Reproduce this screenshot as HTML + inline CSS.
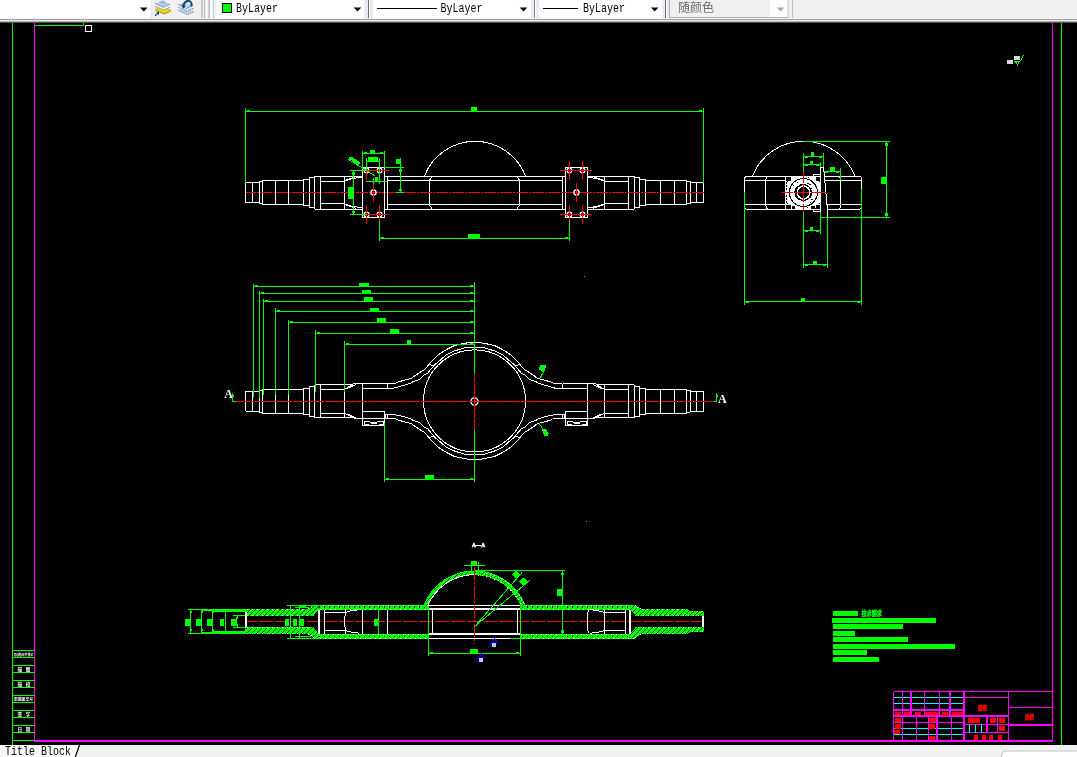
<!DOCTYPE html>
<html><head><meta charset="utf-8"><title>Title Block</title>
<style>
html,body{margin:0;padding:0;background:#000;overflow:hidden}
svg{display:block}
.mono{font-family:"Liberation Mono","DejaVu Sans Mono",monospace;font-size:10px;fill:#000}
.sf{font-family:"Liberation Serif",serif}
.cj{font-family:"Liberation Sans","Noto Sans CJK SC",sans-serif}
.cjs{font-family:"Liberation Sans","Noto Sans CJK SC",sans-serif}
</style></head><body>
<svg width="1077" height="757" viewBox="0 0 1077 757">
<defs>
<filter id="n" x="0" y="0" width="100%" height="100%" filterUnits="userSpaceOnUse" color-interpolation-filters="sRGB"><feOffset dx="0" dy="0"/></filter>
<pattern id="h" width="5" height="5" patternUnits="userSpaceOnUse"><rect width="5" height="5" fill="#00ff00"/><path d="M-1,1 L1,-1 M0,5 L5,0 M4,6 L6,4" stroke="#000" stroke-width="0.72" shape-rendering="crispEdges"/></pattern>
<pattern id="h2" width="4" height="4" patternUnits="userSpaceOnUse"><rect width="4" height="4" fill="#00ff00"/><rect x="1" y="1" width="1" height="1" fill="#000"/></pattern>
<pattern id="h3" width="4" height="4" patternUnits="userSpaceOnUse"><rect width="4" height="4" fill="#00ff00"/><path d="M0,4 L4,0" stroke="#000" stroke-width="0.7"/></pattern>
</defs>
<rect x="0" y="0" width="1077" height="757" fill="#000"/>
<g shape-rendering="crispEdges" filter="url(#n)">
<line x1="12.5" y1="23.0" x2="12.5" y2="745.0" stroke="#00ff00" stroke-width="1" />
<line x1="1061.5" y1="23.0" x2="1061.5" y2="745.0" stroke="#00ff00" stroke-width="1" />
<line x1="34.5" y1="23.0" x2="34.5" y2="741.0" stroke="#ff00ff" stroke-width="1" />
<line x1="1052.5" y1="23.0" x2="1052.5" y2="741.0" stroke="#ff00ff" stroke-width="1" />
<rect x="34.0" y="740.0" width="1019.0" height="2.0" fill="#ff00ff"/>
<polyline points="34.5,25.5 83.5,25.5 83.5,23.0" fill="none" stroke="#00ff00" stroke-width="1" />
<rect x="85.5" y="25.5" width="6.0" height="6.0" fill="none" stroke="#ffffff" stroke-width="1"/>
<line x1="12.5" y1="650.5" x2="34.5" y2="650.5" stroke="#00ff00" stroke-width="1" />
<line x1="12.5" y1="657.5" x2="34.5" y2="657.5" stroke="#00ff00" stroke-width="1" />
<line x1="12.5" y1="665.5" x2="34.5" y2="665.5" stroke="#00ff00" stroke-width="1" />
<line x1="12.5" y1="672.5" x2="34.5" y2="672.5" stroke="#00ff00" stroke-width="1" />
<line x1="12.5" y1="680.5" x2="34.5" y2="680.5" stroke="#00ff00" stroke-width="1" />
<line x1="12.5" y1="687.5" x2="34.5" y2="687.5" stroke="#00ff00" stroke-width="1" />
<line x1="12.5" y1="695.5" x2="34.5" y2="695.5" stroke="#00ff00" stroke-width="1" />
<line x1="12.5" y1="702.5" x2="34.5" y2="702.5" stroke="#00ff00" stroke-width="1" />
<line x1="12.5" y1="710.5" x2="34.5" y2="710.5" stroke="#00ff00" stroke-width="1" />
<line x1="12.5" y1="717.5" x2="34.5" y2="717.5" stroke="#00ff00" stroke-width="1" />
<line x1="12.5" y1="725.5" x2="34.5" y2="725.5" stroke="#00ff00" stroke-width="1" />
<line x1="12.5" y1="732.5" x2="34.5" y2="732.5" stroke="#00ff00" stroke-width="1" />
<line x1="12.5" y1="740.5" x2="34.5" y2="740.5" stroke="#00ff00" stroke-width="1" />
<text x="23.5" y="656.0" font-size="3.1" fill="#ffffff" text-anchor="middle" font-weight="bold" class="cj" textLength="19.5" lengthAdjust="spacingAndGlyphs">借(通)用件登记</text>
<text x="19.9" y="671.0" font-size="4.6" fill="#ffffff" text-anchor="middle" font-weight="bold" class="cj">描</text>
<text x="28.1" y="671.0" font-size="4.6" fill="#ffffff" text-anchor="middle" font-weight="bold" class="cj">图</text>
<text x="19.9" y="686.0" font-size="4.6" fill="#ffffff" text-anchor="middle" font-weight="bold" class="cj">描</text>
<text x="28.1" y="686.0" font-size="4.6" fill="#ffffff" text-anchor="middle" font-weight="bold" class="cj">校</text>
<text x="23.5" y="701.0" font-size="4.0" fill="#ffffff" text-anchor="middle" font-weight="bold" class="cj" textLength="19.5" lengthAdjust="spacingAndGlyphs">旧底图总号</text>
<text x="19.9" y="716.0" font-size="4.6" fill="#ffffff" text-anchor="middle" font-weight="bold" class="cj">签</text>
<text x="28.1" y="716.0" font-size="4.6" fill="#ffffff" text-anchor="middle" font-weight="bold" class="cj">字</text>
<text x="19.9" y="731.0" font-size="4.6" fill="#ffffff" text-anchor="middle" font-weight="bold" class="cj">日</text>
<text x="28.1" y="731.0" font-size="4.6" fill="#ffffff" text-anchor="middle" font-weight="bold" class="cj">期</text>
<line x1="245.5" y1="182.4" x2="259.0" y2="182.4" stroke="#ffffff" stroke-width="1" />
<line x1="245.5" y1="202.6" x2="259.0" y2="202.6" stroke="#ffffff" stroke-width="1" />
<line x1="245.5" y1="182.4" x2="245.5" y2="202.6" stroke="#ffffff" stroke-width="1" />
<line x1="259.0" y1="181.4" x2="262.3" y2="181.4" stroke="#ffffff" stroke-width="1" />
<line x1="259.0" y1="203.6" x2="262.3" y2="203.6" stroke="#ffffff" stroke-width="1" />
<line x1="259.0" y1="181.4" x2="259.0" y2="203.6" stroke="#ffffff" stroke-width="1" />
<line x1="262.3" y1="180.6" x2="303.4" y2="180.6" stroke="#ffffff" stroke-width="1" />
<line x1="262.3" y1="204.4" x2="303.4" y2="204.4" stroke="#ffffff" stroke-width="1" />
<line x1="262.3" y1="180.6" x2="262.3" y2="204.4" stroke="#ffffff" stroke-width="1" />
<line x1="303.4" y1="179.5" x2="309.1" y2="179.5" stroke="#ffffff" stroke-width="1" />
<line x1="303.4" y1="205.5" x2="309.1" y2="205.5" stroke="#ffffff" stroke-width="1" />
<line x1="303.4" y1="179.5" x2="303.4" y2="205.5" stroke="#ffffff" stroke-width="1" />
<line x1="309.1" y1="177.6" x2="314.9" y2="177.6" stroke="#ffffff" stroke-width="1" />
<line x1="309.1" y1="207.4" x2="314.9" y2="207.4" stroke="#ffffff" stroke-width="1" />
<line x1="309.1" y1="177.6" x2="309.1" y2="207.4" stroke="#ffffff" stroke-width="1" />
<line x1="314.9" y1="176.0" x2="362.3" y2="176.0" stroke="#ffffff" stroke-width="1" />
<line x1="314.9" y1="209.0" x2="362.3" y2="209.0" stroke="#ffffff" stroke-width="1" />
<line x1="314.9" y1="176.0" x2="314.9" y2="209.0" stroke="#ffffff" stroke-width="1" />
<line x1="252.3" y1="182.4" x2="252.3" y2="202.6" stroke="#ffffff" stroke-width="1" />
<line x1="275.0" y1="180.6" x2="275.0" y2="204.4" stroke="#ffffff" stroke-width="1" />
<line x1="288.4" y1="180.6" x2="288.4" y2="204.4" stroke="#ffffff" stroke-width="1" />
<line x1="320.6" y1="176.0" x2="320.6" y2="209.0" stroke="#ffffff" stroke-width="1" />
<line x1="344.5" y1="176.0" x2="344.5" y2="209.0" stroke="#ffffff" stroke-width="1" />
<line x1="320.6" y1="181.3" x2="344.5" y2="181.3" stroke="#ffffff" stroke-width="1" />
<line x1="320.6" y1="203.7" x2="344.5" y2="203.7" stroke="#ffffff" stroke-width="1" />
<polyline points="344.5,181.3 352.0,178.6 362.5,177.2" fill="none" stroke="#ffffff" stroke-width="1" />
<polyline points="344.5,203.7 352.0,206.4 362.5,207.8" fill="none" stroke="#ffffff" stroke-width="1" />
<polyline points="346.5,179.9 356.0,176.8" fill="none" stroke="#ffffff" stroke-width="1" />
<polyline points="346.5,205.1 356.0,208.2" fill="none" stroke="#ffffff" stroke-width="1" />
<rect x="362.5" y="167.5" width="22.0" height="50.0" fill="none" stroke="#ffffff" stroke-width="1"/>
<line x1="387.5" y1="176.4" x2="387.5" y2="209.4" stroke="#ffffff" stroke-width="1" />
<line x1="384.5" y1="176.4" x2="387.5" y2="176.4" stroke="#ffffff" stroke-width="1" />
<line x1="384.5" y1="209.4" x2="387.5" y2="209.4" stroke="#ffffff" stroke-width="1" />
<polyline points="432.2,176.4 429.5,180.2 429.5,205.0 432.4,209.4" fill="none" stroke="#ffffff" stroke-width="1" />
<line x1="703.5" y1="182.4" x2="690.0" y2="182.4" stroke="#ffffff" stroke-width="1" />
<line x1="703.5" y1="202.6" x2="690.0" y2="202.6" stroke="#ffffff" stroke-width="1" />
<line x1="703.5" y1="182.4" x2="703.5" y2="202.6" stroke="#ffffff" stroke-width="1" />
<line x1="690.0" y1="181.4" x2="686.7" y2="181.4" stroke="#ffffff" stroke-width="1" />
<line x1="690.0" y1="203.6" x2="686.7" y2="203.6" stroke="#ffffff" stroke-width="1" />
<line x1="690.0" y1="181.4" x2="690.0" y2="203.6" stroke="#ffffff" stroke-width="1" />
<line x1="686.7" y1="180.6" x2="645.6" y2="180.6" stroke="#ffffff" stroke-width="1" />
<line x1="686.7" y1="204.4" x2="645.6" y2="204.4" stroke="#ffffff" stroke-width="1" />
<line x1="686.7" y1="180.6" x2="686.7" y2="204.4" stroke="#ffffff" stroke-width="1" />
<line x1="645.6" y1="179.5" x2="639.9" y2="179.5" stroke="#ffffff" stroke-width="1" />
<line x1="645.6" y1="205.5" x2="639.9" y2="205.5" stroke="#ffffff" stroke-width="1" />
<line x1="645.6" y1="179.5" x2="645.6" y2="205.5" stroke="#ffffff" stroke-width="1" />
<line x1="639.9" y1="177.6" x2="634.1" y2="177.6" stroke="#ffffff" stroke-width="1" />
<line x1="639.9" y1="207.4" x2="634.1" y2="207.4" stroke="#ffffff" stroke-width="1" />
<line x1="639.9" y1="177.6" x2="639.9" y2="207.4" stroke="#ffffff" stroke-width="1" />
<line x1="634.1" y1="176.0" x2="586.7" y2="176.0" stroke="#ffffff" stroke-width="1" />
<line x1="634.1" y1="209.0" x2="586.7" y2="209.0" stroke="#ffffff" stroke-width="1" />
<line x1="634.1" y1="176.0" x2="634.1" y2="209.0" stroke="#ffffff" stroke-width="1" />
<line x1="696.7" y1="182.4" x2="696.7" y2="202.6" stroke="#ffffff" stroke-width="1" />
<line x1="674.0" y1="180.6" x2="674.0" y2="204.4" stroke="#ffffff" stroke-width="1" />
<line x1="660.6" y1="180.6" x2="660.6" y2="204.4" stroke="#ffffff" stroke-width="1" />
<line x1="628.4" y1="176.0" x2="628.4" y2="209.0" stroke="#ffffff" stroke-width="1" />
<line x1="604.5" y1="176.0" x2="604.5" y2="209.0" stroke="#ffffff" stroke-width="1" />
<line x1="628.4" y1="181.3" x2="604.5" y2="181.3" stroke="#ffffff" stroke-width="1" />
<line x1="628.4" y1="203.7" x2="604.5" y2="203.7" stroke="#ffffff" stroke-width="1" />
<polyline points="604.5,181.3 597.0,178.6 587.5,177.2" fill="none" stroke="#ffffff" stroke-width="1" />
<polyline points="604.5,203.7 597.0,206.4 587.5,207.8" fill="none" stroke="#ffffff" stroke-width="1" />
<polyline points="602.5,179.9 593.0,176.8" fill="none" stroke="#ffffff" stroke-width="1" />
<polyline points="602.5,205.1 593.0,208.2" fill="none" stroke="#ffffff" stroke-width="1" />
<rect x="565.5" y="167.5" width="22.0" height="50.0" fill="none" stroke="#ffffff" stroke-width="1"/>
<line x1="562.5" y1="176.4" x2="562.5" y2="209.4" stroke="#ffffff" stroke-width="1" />
<line x1="565.5" y1="176.4" x2="562.5" y2="176.4" stroke="#ffffff" stroke-width="1" />
<line x1="565.5" y1="209.4" x2="562.5" y2="209.4" stroke="#ffffff" stroke-width="1" />
<polyline points="516.8,176.4 519.5,180.2 519.5,205.0 516.6,209.4" fill="none" stroke="#ffffff" stroke-width="1" />
<line x1="387.5" y1="176.4" x2="562.5" y2="176.4" stroke="#ffffff" stroke-width="1" />
<line x1="387.5" y1="209.4" x2="562.5" y2="209.4" stroke="#ffffff" stroke-width="1" />
<line x1="387.5" y1="180.7" x2="562.5" y2="180.7" stroke="#ffffff" stroke-width="1" />
<line x1="387.5" y1="204.5" x2="562.5" y2="204.5" stroke="#ffffff" stroke-width="1" />
<path d="M424.3,176.4 A54.2,54.2 0 0 1 525.7,176.4" fill="none" stroke="#ffffff" stroke-width="1" />
<line x1="245.5" y1="192.5" x2="703.5" y2="192.5" stroke="#ff0000" stroke-width="1" stroke-dasharray="12 1.3 1.5 1.2" stroke-dashoffset="1.7"/>
<circle cx="366.5" cy="170.5" r="2.4" fill="none" stroke="#ffffff" stroke-width="1.25" shape-rendering="geometricPrecision"/>
<circle cx="379.6" cy="170.5" r="2.4" fill="none" stroke="#ffffff" stroke-width="1.25" shape-rendering="geometricPrecision"/>
<line x1="357.1" y1="170.5" x2="389.0" y2="170.5" stroke="#ff0000" stroke-width="1" />
<line x1="366.5" y1="160.8" x2="366.5" y2="179.6" stroke="#ff0000" stroke-width="1" />
<line x1="379.6" y1="160.8" x2="379.6" y2="179.6" stroke="#ff0000" stroke-width="1" />
<circle cx="366.5" cy="214.5" r="2.4" fill="none" stroke="#ffffff" stroke-width="1.25" shape-rendering="geometricPrecision"/>
<circle cx="379.6" cy="214.5" r="2.4" fill="none" stroke="#ffffff" stroke-width="1.25" shape-rendering="geometricPrecision"/>
<line x1="357.1" y1="214.5" x2="389.0" y2="214.5" stroke="#ff0000" stroke-width="1" />
<line x1="366.5" y1="205.0" x2="366.5" y2="223.8" stroke="#ff0000" stroke-width="1" />
<line x1="379.6" y1="205.0" x2="379.6" y2="223.8" stroke="#ff0000" stroke-width="1" />
<circle cx="373.5" cy="192.5" r="2.6" fill="none" stroke="#ffffff" stroke-width="1.25" shape-rendering="geometricPrecision"/>
<line x1="373.5" y1="183.0" x2="373.5" y2="201.8" stroke="#ff0000" stroke-width="1" />
<circle cx="569.4" cy="170.5" r="2.4" fill="none" stroke="#ffffff" stroke-width="1.25" shape-rendering="geometricPrecision"/>
<circle cx="582.5" cy="170.5" r="2.4" fill="none" stroke="#ffffff" stroke-width="1.25" shape-rendering="geometricPrecision"/>
<line x1="560.0" y1="170.5" x2="591.9" y2="170.5" stroke="#ff0000" stroke-width="1" />
<line x1="569.4" y1="160.8" x2="569.4" y2="179.6" stroke="#ff0000" stroke-width="1" />
<line x1="582.5" y1="160.8" x2="582.5" y2="179.6" stroke="#ff0000" stroke-width="1" />
<circle cx="569.4" cy="214.5" r="2.4" fill="none" stroke="#ffffff" stroke-width="1.25" shape-rendering="geometricPrecision"/>
<circle cx="582.5" cy="214.5" r="2.4" fill="none" stroke="#ffffff" stroke-width="1.25" shape-rendering="geometricPrecision"/>
<line x1="560.0" y1="214.5" x2="591.9" y2="214.5" stroke="#ff0000" stroke-width="1" />
<line x1="569.4" y1="205.0" x2="569.4" y2="223.8" stroke="#ff0000" stroke-width="1" />
<line x1="582.5" y1="205.0" x2="582.5" y2="223.8" stroke="#ff0000" stroke-width="1" />
<circle cx="576.5" cy="192.5" r="2.6" fill="none" stroke="#ffffff" stroke-width="1.25" shape-rendering="geometricPrecision"/>
<line x1="576.5" y1="183.0" x2="576.5" y2="201.8" stroke="#ff0000" stroke-width="1" />
<line x1="245.5" y1="111.5" x2="703.5" y2="111.5" stroke="#00ff00" stroke-width="1" />
<line x1="245.5" y1="108.0" x2="245.5" y2="183.0" stroke="#00ff00" stroke-width="1" />
<line x1="703.5" y1="108.0" x2="703.5" y2="183.0" stroke="#00ff00" stroke-width="1" />
<rect x="471.0" y="107.0" width="6.0" height="4.5" fill="#00ff00"/>
<rect x="247.0" y="110.0" width="3.0" height="1.0" fill="#00ff00"/>
<rect x="699.0" y="110.0" width="3.0" height="1.0" fill="#00ff00"/>
<line x1="379.5" y1="238.5" x2="569.5" y2="238.5" stroke="#00ff00" stroke-width="1" />
<line x1="379.5" y1="221.0" x2="379.5" y2="241.0" stroke="#00ff00" stroke-width="1" />
<line x1="569.5" y1="221.0" x2="569.5" y2="241.0" stroke="#00ff00" stroke-width="1" />
<rect x="468.0" y="234.0" width="12.0" height="4.5" fill="#00ff00"/>
<rect x="381.0" y="237.0" width="3.0" height="1.0" fill="#00ff00"/>
<rect x="565.0" y="237.0" width="3.0" height="1.0" fill="#00ff00"/>
<line x1="362.5" y1="153.5" x2="384.5" y2="153.5" stroke="#00ff00" stroke-width="1" />
<line x1="362.5" y1="151.0" x2="362.5" y2="167.5" stroke="#00ff00" stroke-width="1" />
<line x1="384.5" y1="151.0" x2="384.5" y2="167.5" stroke="#00ff00" stroke-width="1" />
<rect x="370.1" y="150.0" width="4.9" height="3.6" fill="#00ff00"/>
<rect x="364.0" y="152.0" width="3.0" height="1.0" fill="#00ff00"/>
<rect x="380.0" y="152.0" width="3.0" height="1.0" fill="#00ff00"/>
<line x1="366.5" y1="161.8" x2="379.6" y2="161.8" stroke="#00ff00" stroke-width="1" />
<line x1="366.5" y1="157.7" x2="366.5" y2="170.5" stroke="#00ff00" stroke-width="1" />
<line x1="379.6" y1="157.7" x2="379.6" y2="183.6" stroke="#00ff00" stroke-width="1" />
<rect x="368.0" y="157.2" width="10.0" height="4.8" fill="#00ff00"/>
<line x1="400.5" y1="157.7" x2="400.5" y2="192.5" stroke="#00ff00" stroke-width="1" />
<line x1="384.5" y1="167.5" x2="404.0" y2="167.5" stroke="#00ff00" stroke-width="1" />
<line x1="396.0" y1="192.5" x2="404.0" y2="192.5" stroke="#00ff00" stroke-width="1" />
<rect x="396.0" y="159.0" width="4.6" height="5.0" fill="#00ff00"/>
<rect x="399.0" y="169.0" width="3.0" height="2.5" fill="#00ff00"/>
<rect x="399.0" y="188.5" width="3.0" height="2.5" fill="#00ff00"/>
<line x1="353.5" y1="170.5" x2="353.5" y2="214.5" stroke="#00ff00" stroke-width="1" />
<line x1="350.0" y1="170.5" x2="366.6" y2="170.5" stroke="#00ff00" stroke-width="1" />
<line x1="350.0" y1="214.5" x2="366.6" y2="214.5" stroke="#00ff00" stroke-width="1" />
<rect x="348.4" y="187.0" width="5.0" height="12.0" fill="#00ff00"/>
<rect x="352.0" y="172.0" width="3.0" height="2.5" fill="#00ff00"/>
<rect x="352.0" y="210.5" width="3.0" height="2.5" fill="#00ff00"/>
<line x1="348.0" y1="159.0" x2="374.6" y2="175.7" stroke="#00ff00" stroke-width="1" />
<polygon points="348.5,158.0 351.0,156.5 360.5,162.5 358.5,165.5" fill="#00ff00" />
<line x1="366.0" y1="181.5" x2="387.0" y2="181.5" stroke="#00ff00" stroke-width="1" />
<line x1="373.5" y1="177.8" x2="373.5" y2="184.2" stroke="#00ff00" stroke-width="1" />
<rect x="374.9" y="177.3" width="3.1" height="4.2" fill="#00ff00"/>
<path d="M747.5,176.3 L858.6,176.3 Q861.7,176.3 861.7,179.5 L861.7,206 Q861.7,209.3 858.6,209.3 L747.5,209.3 Q744.4,209.3 744.4,206 L744.4,179.5 Q744.4,176.3 747.5,176.3 Z" fill="none" stroke="#ffffff" stroke-width="1" />
<line x1="744.4" y1="180.3" x2="861.7" y2="180.3" stroke="#ffffff" stroke-width="1" />
<line x1="744.4" y1="204.5" x2="861.7" y2="204.5" stroke="#ffffff" stroke-width="1" />
<path d="M767.8,176.3 Q765.8,177.3 765.8,180.3 L765.8,205.3 Q765.8,208.3 767.8,209.3" fill="none" stroke="#ffffff" stroke-width="1" />
<path d="M788.3,176.3 Q786.3,177.3 786.3,180.3 L786.3,205.3 Q786.3,208.3 788.3,209.3" fill="none" stroke="#ffffff" stroke-width="1" />
<path d="M838.5,176.3 Q840.5,177.3 840.5,180.3 L840.5,205.3 Q840.5,208.3 838.5,209.3" fill="none" stroke="#ffffff" stroke-width="1" />
<path d="M752.7,175.8 A54.9,54.9 0 0 1 854.7,175.8" fill="none" stroke="#ffffff" stroke-width="1" />
<rect x="785.0" y="176.3" width="36.2" height="33.0" fill="#ffffff"/>
<circle cx="803.4" cy="192.5" r="14.0" fill="none" stroke="#000" stroke-width="1.0"/>
<rect x="786.0" y="177.0" width="4.5" height="3.5" fill="#000"/>
<rect x="816.2" y="177.0" width="4.0" height="3.5" fill="#000"/>
<rect x="785.8" y="205.2" width="4.7" height="3.5" fill="#000"/>
<rect x="816.2" y="205.2" width="4.0" height="3.7" fill="#000"/>
<rect x="810.5" y="206.2" width="4.5" height="2.7" fill="#000"/>
<rect x="791.5" y="206.2" width="3.5" height="2.3" fill="#000"/>
<line x1="791.2" y1="176.3" x2="789.2" y2="178.3" stroke="#000" stroke-width="1" />
<line x1="787.9" y1="181.1" x2="786.1" y2="182.9" stroke="#000" stroke-width="1" />
<line x1="791.2" y1="208.7" x2="789.2" y2="206.7" stroke="#000" stroke-width="1" />
<line x1="787.9" y1="203.9" x2="786.1" y2="202.1" stroke="#000" stroke-width="1" />
<line x1="815.6" y1="176.3" x2="817.6" y2="178.3" stroke="#000" stroke-width="1" />
<line x1="818.9" y1="181.1" x2="820.7" y2="182.9" stroke="#000" stroke-width="1" />
<line x1="815.6" y1="208.7" x2="817.6" y2="206.7" stroke="#000" stroke-width="1" />
<line x1="818.9" y1="203.9" x2="820.7" y2="202.1" stroke="#000" stroke-width="1" />
<line x1="786.3" y1="181.5" x2="786.3" y2="190.0" stroke="#000" stroke-width="1" stroke-dasharray="2 1"/>
<line x1="786.3" y1="195.0" x2="786.3" y2="204.0" stroke="#000" stroke-width="1" stroke-dasharray="2 1"/>
<rect x="785.5" y="176.5" width="35.2" height="32.5" fill="none" stroke="#ffffff" stroke-width="1"/>
<circle cx="803.4" cy="192.5" r="7.9" fill="none" stroke="#000" stroke-width="1.3"/>
<path d="M797.2,187.5 A8,8 0 0 0 797.2,197.5" fill="none" stroke="#000" stroke-width="2.2" />
<polygon points="808.5,194.6 805.5,197.6 801.3,197.6 798.3,194.6 798.3,190.4 801.3,187.4 805.5,187.4 808.5,190.4" fill="#000" />
<rect x="796.9" y="182.0" width="1.1" height="1.1" fill="#000"/>
<rect x="792.9" y="185.0" width="1.1" height="1.1" fill="#000"/>
<rect x="807.4" y="183.0" width="1.1" height="1.1" fill="#000"/>
<rect x="809.4" y="184.0" width="1.1" height="1.1" fill="#000"/>
<rect x="810.9" y="187.5" width="1.1" height="1.1" fill="#000"/>
<rect x="808.9" y="186.5" width="1.1" height="1.1" fill="#000"/>
<rect x="810.4" y="194.5" width="1.1" height="1.1" fill="#000"/>
<rect x="809.4" y="197.0" width="1.1" height="1.1" fill="#000"/>
<rect x="811.4" y="199.0" width="1.1" height="1.1" fill="#000"/>
<rect x="809.9" y="202.0" width="1.1" height="1.1" fill="#000"/>
<rect x="796.9" y="197.5" width="1.1" height="1.1" fill="#000"/>
<rect x="798.4" y="199.0" width="1.1" height="1.1" fill="#000"/>
<rect x="806.9" y="206.5" width="1.1" height="1.1" fill="#000"/>
<rect x="807.9" y="177.0" width="1.1" height="1.1" fill="#000"/>
<polygon points="820.5,167.5 823.6,167.5 827.6,211.5 827.6,216.8 820.5,216.8" fill="#000" />
<polyline points="813.4,176.3 813.4,174.1 820.5,174.1 820.5,167.5 823.6,167.5 827.6,211.5 827.6,216.8" fill="none" stroke="#ffffff" stroke-width="1" />
<polyline points="813.4,209.3 813.4,211.5 820.5,211.5" fill="none" stroke="#ffffff" stroke-width="1" />
<line x1="820.5" y1="167.5" x2="820.5" y2="216.8" stroke="#ffffff" stroke-width="1" />
<line x1="781.0" y1="192.5" x2="825.8" y2="192.5" stroke="#ff0000" stroke-width="1" stroke-dasharray="12 1.5 14.5 1.5 16"/>
<line x1="803.4" y1="172.0" x2="803.4" y2="211.7" stroke="#ff0000" stroke-width="1" stroke-dasharray="10.5 1.5 18 1.5 9"/>
<line x1="803.4" y1="141.4" x2="890.3" y2="141.4" stroke="#00ff00" stroke-width="1" />
<line x1="886.5" y1="141.4" x2="886.5" y2="217.3" stroke="#00ff00" stroke-width="1" />
<line x1="820.5" y1="217.3" x2="890.3" y2="217.3" stroke="#00ff00" stroke-width="1" />
<rect x="881.3" y="177.0" width="5.0" height="7.0" fill="#00ff00"/>
<rect x="885.0" y="143.0" width="3.0" height="3.0" fill="#00ff00"/>
<rect x="885.0" y="213.0" width="3.0" height="3.0" fill="#00ff00"/>
<rect x="805.0" y="157.0" width="3.0" height="1.0" fill="#00ff00"/>
<rect x="819.0" y="157.0" width="3.0" height="1.0" fill="#00ff00"/>
<rect x="805.0" y="165.0" width="3.0" height="1.0" fill="#00ff00"/>
<rect x="816.0" y="165.0" width="3.0" height="1.0" fill="#00ff00"/>
<rect x="825.0" y="172.0" width="3.0" height="1.0" fill="#00ff00"/>
<rect x="836.0" y="172.0" width="3.0" height="1.0" fill="#00ff00"/>
<line x1="803.4" y1="156.5" x2="823.7" y2="156.5" stroke="#00ff00" stroke-width="1" />
<line x1="803.4" y1="153.0" x2="803.4" y2="172.0" stroke="#00ff00" stroke-width="1" />
<line x1="823.7" y1="153.0" x2="823.7" y2="167.0" stroke="#00ff00" stroke-width="1" />
<rect x="811.2" y="152.3" width="2.8" height="4.2" fill="#00ff00"/>
<line x1="803.4" y1="164.7" x2="820.7" y2="164.7" stroke="#00ff00" stroke-width="1" />
<line x1="820.7" y1="161.5" x2="820.7" y2="167.0" stroke="#00ff00" stroke-width="1" />
<rect x="810.0" y="161.0" width="3.0" height="3.7" fill="#00ff00"/>
<line x1="823.7" y1="171.2" x2="840.8" y2="171.2" stroke="#00ff00" stroke-width="1" />
<line x1="840.8" y1="168.0" x2="840.8" y2="180.3" stroke="#00ff00" stroke-width="1" />
<rect x="830.0" y="167.0" width="4.5" height="4.2" fill="#00ff00"/>
<line x1="744.4" y1="191.5" x2="744.4" y2="305.0" stroke="#00ff00" stroke-width="1" />
<line x1="861.5" y1="189.2" x2="861.5" y2="305.0" stroke="#00ff00" stroke-width="1" />
<line x1="744.4" y1="301.6" x2="861.5" y2="301.6" stroke="#00ff00" stroke-width="1" />
<rect x="801.0" y="298.0" width="4.0" height="3.6" fill="#00ff00"/>
<rect x="746.0" y="302.0" width="3.0" height="1.0" fill="#00ff00"/>
<rect x="857.0" y="302.0" width="3.0" height="1.0" fill="#00ff00"/>
<line x1="803.4" y1="211.7" x2="803.4" y2="267.8" stroke="#00ff00" stroke-width="1" />
<line x1="820.5" y1="211.6" x2="820.5" y2="233.6" stroke="#00ff00" stroke-width="1" />
<line x1="827.8" y1="216.5" x2="827.8" y2="267.8" stroke="#00ff00" stroke-width="1" />
<line x1="803.4" y1="230.6" x2="820.5" y2="230.6" stroke="#00ff00" stroke-width="1" />
<rect x="810.0" y="227.0" width="3.0" height="3.6" fill="#00ff00"/>
<rect x="805.0" y="231.0" width="3.0" height="1.0" fill="#00ff00"/>
<rect x="816.0" y="231.0" width="3.0" height="1.0" fill="#00ff00"/>
<line x1="803.4" y1="264.4" x2="827.8" y2="264.4" stroke="#00ff00" stroke-width="1" />
<rect x="813.0" y="261.0" width="3.8" height="3.4" fill="#00ff00"/>
<rect x="805.0" y="265.0" width="3.0" height="1.0" fill="#00ff00"/>
<rect x="823.0" y="265.0" width="3.0" height="1.0" fill="#00ff00"/>
<rect x="840.0" y="203.5" width="1.5" height="1.5" fill="#00ff00"/>
<line x1="245.5" y1="391.1" x2="259.0" y2="391.1" stroke="#ffffff" stroke-width="1" />
<line x1="245.5" y1="411.3" x2="259.0" y2="411.3" stroke="#ffffff" stroke-width="1" />
<line x1="245.5" y1="391.1" x2="245.5" y2="411.3" stroke="#ffffff" stroke-width="1" />
<line x1="259.0" y1="390.1" x2="262.3" y2="390.1" stroke="#ffffff" stroke-width="1" />
<line x1="259.0" y1="412.3" x2="262.3" y2="412.3" stroke="#ffffff" stroke-width="1" />
<line x1="259.0" y1="390.1" x2="259.0" y2="412.3" stroke="#ffffff" stroke-width="1" />
<line x1="262.3" y1="389.3" x2="303.4" y2="389.3" stroke="#ffffff" stroke-width="1" />
<line x1="262.3" y1="413.1" x2="303.4" y2="413.1" stroke="#ffffff" stroke-width="1" />
<line x1="262.3" y1="389.3" x2="262.3" y2="413.1" stroke="#ffffff" stroke-width="1" />
<line x1="303.4" y1="388.2" x2="309.1" y2="388.2" stroke="#ffffff" stroke-width="1" />
<line x1="303.4" y1="414.2" x2="309.1" y2="414.2" stroke="#ffffff" stroke-width="1" />
<line x1="303.4" y1="388.2" x2="303.4" y2="414.2" stroke="#ffffff" stroke-width="1" />
<line x1="309.1" y1="386.3" x2="314.9" y2="386.3" stroke="#ffffff" stroke-width="1" />
<line x1="309.1" y1="416.1" x2="314.9" y2="416.1" stroke="#ffffff" stroke-width="1" />
<line x1="309.1" y1="386.3" x2="309.1" y2="416.1" stroke="#ffffff" stroke-width="1" />
<line x1="314.9" y1="384.7" x2="344.5" y2="384.7" stroke="#ffffff" stroke-width="1" />
<line x1="314.9" y1="417.7" x2="344.5" y2="417.7" stroke="#ffffff" stroke-width="1" />
<line x1="314.9" y1="384.7" x2="314.9" y2="417.7" stroke="#ffffff" stroke-width="1" />
<line x1="252.3" y1="391.1" x2="252.3" y2="411.3" stroke="#ffffff" stroke-width="1" />
<line x1="275.0" y1="389.3" x2="275.0" y2="413.1" stroke="#ffffff" stroke-width="1" />
<line x1="288.4" y1="389.3" x2="288.4" y2="413.1" stroke="#ffffff" stroke-width="1" />
<line x1="320.6" y1="384.7" x2="320.6" y2="417.7" stroke="#ffffff" stroke-width="1" />
<line x1="344.5" y1="384.7" x2="344.5" y2="417.7" stroke="#ffffff" stroke-width="1" />
<line x1="320.6" y1="389.2" x2="344.5" y2="389.2" stroke="#ffffff" stroke-width="1" />
<line x1="320.6" y1="413.2" x2="344.5" y2="413.2" stroke="#ffffff" stroke-width="1" />
<polyline points="344.5,384.5 352.8,384.5 353.4,383.5 387.5,383.5" fill="none" stroke="#ffffff" stroke-width="1" />
<polyline points="344.5,417.5 353.6,417.5 354.4,418.5 362.5,418.5" fill="none" stroke="#ffffff" stroke-width="1" />
<polyline points="344.5,389.2 352.8,384.6" fill="none" stroke="#ffffff" stroke-width="1" />
<polyline points="346.5,388.9 356.0,384.4" fill="none" stroke="#ffffff" stroke-width="1" />
<polyline points="344.5,413.4 353.6,417.4" fill="none" stroke="#ffffff" stroke-width="1" />
<polyline points="346.5,413.6 356.0,418.0" fill="none" stroke="#ffffff" stroke-width="1" />
<line x1="362.5" y1="383.5" x2="362.5" y2="425.7" stroke="#ffffff" stroke-width="1" />
<line x1="362.5" y1="388.5" x2="387.5" y2="388.5" stroke="#ffffff" stroke-width="1" />
<line x1="387.5" y1="383.5" x2="387.5" y2="388.5" stroke="#ffffff" stroke-width="1" />
<line x1="385.4" y1="414.5" x2="385.4" y2="418.5" stroke="#ffffff" stroke-width="1" />
<line x1="387.8" y1="414.5" x2="387.8" y2="418.5" stroke="#ffffff" stroke-width="1" />
<line x1="384.5" y1="414.5" x2="387.8" y2="414.5" stroke="#ffffff" stroke-width="1" />
<line x1="362.5" y1="418.5" x2="387.8" y2="418.5" stroke="#ffffff" stroke-width="1" />
<rect x="362.5" y="411.5" width="22.0" height="14.0" fill="none" stroke="#ffffff" stroke-width="1"/>
<polyline points="364.0,424.5 364.0,421.3 369.5,421.3 370.5,422.5 376.5,422.5 377.5,421.3 383.0,421.3 383.0,424.5" fill="none" stroke="#ffffff" stroke-width="1" />
<line x1="364.0" y1="424.5" x2="368.5" y2="424.5" stroke="#ffffff" stroke-width="1" />
<line x1="378.5" y1="424.5" x2="383.0" y2="424.5" stroke="#ffffff" stroke-width="1" />
<line x1="370.5" y1="423.8" x2="376.5" y2="423.8" stroke="#ffffff" stroke-width="1" />
<polyline points="387.5,383.5 395.7,383.5 396.5,382.5 400.0,381.4 406.4,379.7 411.4,378.5 415.0,375.7 419.2,372.8 423.5,370.3 427.8,366.0 428.9,363.9 433.5,359.3 438.6,354.6 443.6,351.3 448.5,348.5 453.5,346.0 459.0,344.5 464.2,343.5 468.5,342.6 474.5,342.5" fill="none" stroke="#ffffff" stroke-width="1" />
<polyline points="387.5,388.5 392.8,388.5 396.4,387.4 402.8,385.6 410.0,383.5 413.5,381.4 419.2,379.6 423.5,375.3 427.8,373.2 429.6,370.7 433.5,366.7 435.0,364.5 440.0,360.3 445.7,355.3 453.5,351.3 460.0,349.2 465.7,347.5 474.5,347.4" fill="none" stroke="#ffffff" stroke-width="1" />
<polyline points="387.5,418.5 395.7,418.5 396.5,419.5 400.0,420.6 406.4,422.3 411.4,423.5 415.0,426.3 419.2,429.2 423.5,431.7 427.8,436.0 428.9,438.1 433.5,442.7 438.6,447.4 443.6,450.7 448.5,453.5 453.5,456.0 459.0,457.5 464.2,458.5 468.5,459.4 474.5,459.5" fill="none" stroke="#ffffff" stroke-width="1" />
<polyline points="387.5,414.5 392.8,414.5 396.4,415.1 402.8,416.4 410.0,418.5 413.5,420.6 419.2,422.4 423.5,426.7 427.8,428.8 429.6,431.3 433.5,435.3 435.0,437.5 440.0,441.7 445.7,446.7 453.5,450.7 460.0,452.8 465.7,454.5 474.5,454.6" fill="none" stroke="#ffffff" stroke-width="1" />
<line x1="428.9" y1="363.9" x2="433.5" y2="366.0" stroke="#ffffff" stroke-width="1" />
<line x1="428.9" y1="438.1" x2="433.5" y2="436.0" stroke="#ffffff" stroke-width="1" />
<line x1="703.5" y1="391.1" x2="690.0" y2="391.1" stroke="#ffffff" stroke-width="1" />
<line x1="703.5" y1="411.3" x2="690.0" y2="411.3" stroke="#ffffff" stroke-width="1" />
<line x1="703.5" y1="391.1" x2="703.5" y2="411.3" stroke="#ffffff" stroke-width="1" />
<line x1="690.0" y1="390.1" x2="686.7" y2="390.1" stroke="#ffffff" stroke-width="1" />
<line x1="690.0" y1="412.3" x2="686.7" y2="412.3" stroke="#ffffff" stroke-width="1" />
<line x1="690.0" y1="390.1" x2="690.0" y2="412.3" stroke="#ffffff" stroke-width="1" />
<line x1="686.7" y1="389.3" x2="645.6" y2="389.3" stroke="#ffffff" stroke-width="1" />
<line x1="686.7" y1="413.1" x2="645.6" y2="413.1" stroke="#ffffff" stroke-width="1" />
<line x1="686.7" y1="389.3" x2="686.7" y2="413.1" stroke="#ffffff" stroke-width="1" />
<line x1="645.6" y1="388.2" x2="639.9" y2="388.2" stroke="#ffffff" stroke-width="1" />
<line x1="645.6" y1="414.2" x2="639.9" y2="414.2" stroke="#ffffff" stroke-width="1" />
<line x1="645.6" y1="388.2" x2="645.6" y2="414.2" stroke="#ffffff" stroke-width="1" />
<line x1="639.9" y1="386.3" x2="634.1" y2="386.3" stroke="#ffffff" stroke-width="1" />
<line x1="639.9" y1="416.1" x2="634.1" y2="416.1" stroke="#ffffff" stroke-width="1" />
<line x1="639.9" y1="386.3" x2="639.9" y2="416.1" stroke="#ffffff" stroke-width="1" />
<line x1="634.1" y1="384.7" x2="604.5" y2="384.7" stroke="#ffffff" stroke-width="1" />
<line x1="634.1" y1="417.7" x2="604.5" y2="417.7" stroke="#ffffff" stroke-width="1" />
<line x1="634.1" y1="384.7" x2="634.1" y2="417.7" stroke="#ffffff" stroke-width="1" />
<line x1="696.7" y1="391.1" x2="696.7" y2="411.3" stroke="#ffffff" stroke-width="1" />
<line x1="674.0" y1="389.3" x2="674.0" y2="413.1" stroke="#ffffff" stroke-width="1" />
<line x1="660.6" y1="389.3" x2="660.6" y2="413.1" stroke="#ffffff" stroke-width="1" />
<line x1="628.4" y1="384.7" x2="628.4" y2="417.7" stroke="#ffffff" stroke-width="1" />
<line x1="604.5" y1="384.7" x2="604.5" y2="417.7" stroke="#ffffff" stroke-width="1" />
<line x1="628.4" y1="389.2" x2="604.5" y2="389.2" stroke="#ffffff" stroke-width="1" />
<line x1="628.4" y1="413.2" x2="604.5" y2="413.2" stroke="#ffffff" stroke-width="1" />
<polyline points="604.5,384.5 596.2,384.5 595.6,383.5 562.5,383.5" fill="none" stroke="#ffffff" stroke-width="1" />
<polyline points="604.5,417.5 595.4,417.5 594.6,418.5 587.5,418.5" fill="none" stroke="#ffffff" stroke-width="1" />
<polyline points="604.5,389.2 596.2,384.6" fill="none" stroke="#ffffff" stroke-width="1" />
<polyline points="602.5,388.9 593.0,384.4" fill="none" stroke="#ffffff" stroke-width="1" />
<polyline points="604.5,413.4 595.4,417.4" fill="none" stroke="#ffffff" stroke-width="1" />
<polyline points="602.5,413.6 593.0,418.0" fill="none" stroke="#ffffff" stroke-width="1" />
<line x1="587.5" y1="383.5" x2="587.5" y2="425.7" stroke="#ffffff" stroke-width="1" />
<line x1="587.5" y1="388.5" x2="562.5" y2="388.5" stroke="#ffffff" stroke-width="1" />
<line x1="562.5" y1="383.5" x2="562.5" y2="388.5" stroke="#ffffff" stroke-width="1" />
<line x1="564.6" y1="414.5" x2="564.6" y2="418.5" stroke="#ffffff" stroke-width="1" />
<line x1="562.2" y1="414.5" x2="562.2" y2="418.5" stroke="#ffffff" stroke-width="1" />
<line x1="565.5" y1="414.5" x2="562.2" y2="414.5" stroke="#ffffff" stroke-width="1" />
<line x1="587.5" y1="418.5" x2="562.2" y2="418.5" stroke="#ffffff" stroke-width="1" />
<rect x="565.5" y="411.5" width="22.0" height="14.0" fill="none" stroke="#ffffff" stroke-width="1"/>
<polyline points="586.0,424.5 586.0,421.3 580.5,421.3 579.5,422.5 573.5,422.5 572.5,421.3 567.0,421.3 567.0,424.5" fill="none" stroke="#ffffff" stroke-width="1" />
<line x1="586.0" y1="424.5" x2="581.5" y2="424.5" stroke="#ffffff" stroke-width="1" />
<line x1="571.5" y1="424.5" x2="567.0" y2="424.5" stroke="#ffffff" stroke-width="1" />
<line x1="579.5" y1="423.8" x2="573.5" y2="423.8" stroke="#ffffff" stroke-width="1" />
<polyline points="561.5,383.5 553.3,383.5 552.5,382.5 549.0,381.4 542.6,379.7 537.6,378.5 534.0,375.7 529.8,372.8 525.5,370.3 521.2,366.0 520.1,363.9 515.5,359.3 510.4,354.6 505.4,351.3 500.5,348.5 495.5,346.0 490.0,344.5 484.8,343.5 480.5,342.6 474.5,342.5" fill="none" stroke="#ffffff" stroke-width="1" />
<polyline points="561.5,388.5 556.2,388.5 552.6,387.4 546.2,385.6 539.0,383.5 535.5,381.4 529.8,379.6 525.5,375.3 521.2,373.2 519.4,370.7 515.5,366.7 514.0,364.5 509.0,360.3 503.3,355.3 495.5,351.3 489.0,349.2 483.3,347.5 474.5,347.4" fill="none" stroke="#ffffff" stroke-width="1" />
<polyline points="561.5,418.5 553.3,418.5 552.5,419.5 549.0,420.6 542.6,422.3 537.6,423.5 534.0,426.3 529.8,429.2 525.5,431.7 521.2,436.0 520.1,438.1 515.5,442.7 510.4,447.4 505.4,450.7 500.5,453.5 495.5,456.0 490.0,457.5 484.8,458.5 480.5,459.4 474.5,459.5" fill="none" stroke="#ffffff" stroke-width="1" />
<polyline points="561.5,414.5 556.2,414.5 552.6,415.1 546.2,416.4 539.0,418.5 535.5,420.6 529.8,422.4 525.5,426.7 521.2,428.8 519.4,431.3 515.5,435.3 514.0,437.5 509.0,441.7 503.3,446.7 495.5,450.7 489.0,452.8 483.3,454.5 474.5,454.6" fill="none" stroke="#ffffff" stroke-width="1" />
<line x1="520.1" y1="363.9" x2="515.5" y2="366.0" stroke="#ffffff" stroke-width="1" />
<line x1="520.1" y1="438.1" x2="515.5" y2="436.0" stroke="#ffffff" stroke-width="1" />
<circle cx="474.5" cy="400.9" r="51.0" fill="none" stroke="#ffffff" stroke-width="1"/>
<circle cx="474.5" cy="401.5" r="3.6" fill="none" stroke="#ffffff" stroke-width="1.4" shape-rendering="geometricPrecision"/>
<line x1="236.0" y1="401.5" x2="714.0" y2="401.5" stroke="#ff0000" stroke-width="1" stroke-dasharray="14.6 1.4" stroke-dashoffset="7"/>
<line x1="474.5" y1="373.8" x2="474.5" y2="383.0" stroke="#ff0000" stroke-width="1" />
<line x1="474.5" y1="384.2" x2="474.5" y2="415.6" stroke="#ff0000" stroke-width="1" />
<line x1="474.5" y1="416.4" x2="474.5" y2="418.0" stroke="#ff0000" stroke-width="1" />
<line x1="474.5" y1="419.0" x2="474.5" y2="429.8" stroke="#ff0000" stroke-width="1" />
<text x="228.6" y="398.4" font-size="12" font-weight="bold" fill="#fff" text-anchor="middle" class="sf">A</text>
<text x="722.3" y="403.2" font-size="12" font-weight="bold" fill="#fff" text-anchor="middle" class="sf">A</text>
<polyline points="232.6,393.0 232.6,401.5 236.0,401.5" fill="none" stroke="#00ff00" stroke-width="1" />
<rect x="232.6" y="395.2" width="1.8" height="2.2" fill="#00ff00"/>
<polyline points="716.4,393.0 716.4,401.5 714.0,401.5" fill="none" stroke="#00ff00" stroke-width="1" />
<rect x="716.4" y="395.2" width="1.2" height="2.2" fill="#00ff00"/>
<line x1="253.5" y1="286.5" x2="474.5" y2="286.5" stroke="#00ff00" stroke-width="1" />
<line x1="253.5" y1="283.5" x2="253.5" y2="397.0" stroke="#00ff00" stroke-width="1" />
<rect x="359.0" y="282.5" width="9.6" height="4.0" fill="#00ff00"/>
<rect x="255.0" y="285.0" width="3.0" height="1.0" fill="#00ff00"/>
<rect x="470.0" y="285.0" width="3.0" height="1.0" fill="#00ff00"/>
<line x1="259.5" y1="293.5" x2="474.5" y2="293.5" stroke="#00ff00" stroke-width="1" />
<line x1="259.5" y1="290.5" x2="259.5" y2="397.5" stroke="#00ff00" stroke-width="1" />
<rect x="362.0" y="289.5" width="8.6" height="4.0" fill="#00ff00"/>
<rect x="261.0" y="292.0" width="3.0" height="1.0" fill="#00ff00"/>
<rect x="470.0" y="292.0" width="3.0" height="1.0" fill="#00ff00"/>
<line x1="263.4" y1="301.5" x2="474.5" y2="301.5" stroke="#00ff00" stroke-width="1" />
<line x1="263.4" y1="298.5" x2="263.4" y2="395.0" stroke="#00ff00" stroke-width="1" />
<rect x="364.0" y="297.0" width="9.0" height="4.5" fill="#00ff00"/>
<rect x="265.0" y="300.0" width="3.0" height="1.0" fill="#00ff00"/>
<rect x="470.0" y="300.0" width="3.0" height="1.0" fill="#00ff00"/>
<line x1="275.4" y1="311.4" x2="474.5" y2="311.4" stroke="#00ff00" stroke-width="1" />
<line x1="275.4" y1="308.4" x2="275.4" y2="395.0" stroke="#00ff00" stroke-width="1" />
<rect x="370.0" y="307.8" width="8.6" height="3.6" fill="#00ff00"/>
<rect x="277.0" y="310.0" width="3.0" height="1.0" fill="#00ff00"/>
<rect x="470.0" y="310.0" width="3.0" height="1.0" fill="#00ff00"/>
<line x1="288.5" y1="322.5" x2="474.5" y2="322.5" stroke="#00ff00" stroke-width="1" />
<line x1="288.5" y1="319.5" x2="288.5" y2="395.0" stroke="#00ff00" stroke-width="1" />
<rect x="377.0" y="318.2" width="8.7" height="4.3" fill="#00ff00"/>
<rect x="290.0" y="321.0" width="3.0" height="1.0" fill="#00ff00"/>
<rect x="470.0" y="321.0" width="3.0" height="1.0" fill="#00ff00"/>
<line x1="315.5" y1="333.3" x2="474.5" y2="333.3" stroke="#00ff00" stroke-width="1" />
<line x1="315.5" y1="330.3" x2="315.5" y2="392.0" stroke="#00ff00" stroke-width="1" />
<rect x="390.0" y="329.0" width="9.0" height="4.3" fill="#00ff00"/>
<rect x="317.0" y="332.0" width="3.0" height="1.0" fill="#00ff00"/>
<rect x="470.0" y="332.0" width="3.0" height="1.0" fill="#00ff00"/>
<line x1="344.5" y1="344.0" x2="474.5" y2="344.0" stroke="#00ff00" stroke-width="1" />
<line x1="344.5" y1="341.0" x2="344.5" y2="392.0" stroke="#00ff00" stroke-width="1" />
<rect x="406.7" y="340.0" width="4.3" height="4.0" fill="#00ff00"/>
<rect x="346.0" y="343.0" width="3.0" height="1.0" fill="#00ff00"/>
<rect x="470.0" y="343.0" width="3.0" height="1.0" fill="#00ff00"/>
<line x1="474.5" y1="282.0" x2="474.5" y2="373.8" stroke="#00ff00" stroke-width="1" />
<line x1="474.5" y1="429.8" x2="474.5" y2="482.0" stroke="#00ff00" stroke-width="1" />
<line x1="384.8" y1="479.0" x2="474.5" y2="479.0" stroke="#00ff00" stroke-width="1" />
<line x1="384.8" y1="423.0" x2="384.8" y2="481.6" stroke="#00ff00" stroke-width="1" />
<rect x="425.0" y="475.0" width="9.0" height="4.0" fill="#00ff00"/>
<rect x="386.0" y="478.0" width="3.0" height="1.0" fill="#00ff00"/>
<rect x="470.0" y="478.0" width="3.0" height="1.0" fill="#00ff00"/>
<line x1="542.9" y1="372.9" x2="539.9" y2="378.6" stroke="#00ff00" stroke-width="1" />
<polygon points="540.0,365.0 546.0,365.5 545.0,370.0 543.5,373.5 541.5,371.0 538.8,369.5" fill="#00ff00" />
<line x1="539.3" y1="423.5" x2="544.0" y2="431.2" stroke="#00ff00" stroke-width="1" />
<polygon points="542.3,430.5 545.0,428.8 548.8,433.0 547.0,436.5 544.5,436.0" fill="#00ff00" />
<rect x="584.0" y="276.0" width="1.0" height="1.0" fill="#888"/>
<rect x="586.0" y="521.0" width="1.0" height="1.0" fill="#888"/>
<rect x="317.7" y="605.0" width="110.6" height="4.5" fill="#00ff00"/>
<rect x="317.7" y="633.5" width="110.6" height="5.5" fill="#00ff00"/>
<line x1="318.7" y1="607.0" x2="428.3" y2="607.0" stroke="#000" stroke-width="1.6" stroke-dasharray="1.6 3.4"/>
<line x1="318.7" y1="636.5" x2="428.3" y2="636.5" stroke="#000" stroke-width="1.6" stroke-dasharray="1.6 3.4"/>
<line x1="317.7" y1="605.5" x2="428.3" y2="605.5" stroke="#ffffff" stroke-width="1" stroke-dasharray="1 4"/>
<line x1="320.2" y1="609.0" x2="428.3" y2="609.0" stroke="#ffffff" stroke-width="1" stroke-dasharray="1 4"/>
<line x1="317.7" y1="634.0" x2="428.3" y2="634.0" stroke="#ffffff" stroke-width="1" stroke-dasharray="1 4"/>
<line x1="320.2" y1="638.5" x2="428.3" y2="638.5" stroke="#ffffff" stroke-width="1" stroke-dasharray="1 4"/>
<rect x="520.7" y="605.0" width="114.3" height="4.5" fill="#00ff00"/>
<rect x="520.7" y="633.5" width="114.3" height="5.5" fill="#00ff00"/>
<line x1="521.7" y1="607.0" x2="635.0" y2="607.0" stroke="#000" stroke-width="1.6" stroke-dasharray="1.6 3.4"/>
<line x1="521.7" y1="636.5" x2="635.0" y2="636.5" stroke="#000" stroke-width="1.6" stroke-dasharray="1.6 3.4"/>
<line x1="520.7" y1="605.5" x2="635.0" y2="605.5" stroke="#ffffff" stroke-width="1" stroke-dasharray="1 4"/>
<line x1="523.2" y1="609.0" x2="635.0" y2="609.0" stroke="#ffffff" stroke-width="1" stroke-dasharray="1 4"/>
<line x1="520.7" y1="634.0" x2="635.0" y2="634.0" stroke="#ffffff" stroke-width="1" stroke-dasharray="1 4"/>
<line x1="523.2" y1="638.5" x2="635.0" y2="638.5" stroke="#ffffff" stroke-width="1" stroke-dasharray="1 4"/>
<line x1="245.6" y1="621.5" x2="703.0" y2="621.5" stroke="#ff0000" stroke-width="1" stroke-dasharray="14.6 1.4" stroke-dashoffset="3"/>
<polygon points="629.8,605.0 634.9,605.0 641.6,608.9 686.9,608.9 691.4,611.1 704.0,611.1 704.0,616.0 635.7,616.0 630.8,609.7 629.8,609.5" fill="url(#h)" />
<polygon points="629.8,638.0 634.9,638.0 641.6,634.1 686.9,634.1 691.4,631.9 704.0,631.9 704.0,627.0 635.7,627.0 630.8,633.3 629.8,633.5" fill="url(#h)" />
<line x1="642.0" y1="609.4" x2="687.0" y2="609.4" stroke="#ffffff" stroke-width="1" stroke-dasharray="1 4"/>
<line x1="692.0" y1="611.6" x2="704.0" y2="611.6" stroke="#ffffff" stroke-width="1" stroke-dasharray="1 4"/>
<line x1="638.0" y1="615.5" x2="703.0" y2="615.5" stroke="#ffffff" stroke-width="1" stroke-dasharray="1 4"/>
<polyline points="634.9,605.5 641.6,609.4" fill="none" stroke="#ffffff" stroke-width="1" stroke-dasharray="1 2"/>
<line x1="642.0" y1="633.6" x2="687.0" y2="633.6" stroke="#ffffff" stroke-width="1" stroke-dasharray="1 4"/>
<line x1="692.0" y1="631.4" x2="704.0" y2="631.4" stroke="#ffffff" stroke-width="1" stroke-dasharray="1 4"/>
<line x1="638.0" y1="627.5" x2="703.0" y2="627.5" stroke="#ffffff" stroke-width="1" stroke-dasharray="1 4"/>
<polyline points="634.9,637.5 641.6,633.6" fill="none" stroke="#ffffff" stroke-width="1" stroke-dasharray="1 2"/>
<rect x="702.0" y="615.8" width="2.0" height="11.4" fill="#ffffff"/>
<polygon points="319.2,605.0 314.1,605.0 307.4,608.9 245.5,608.9 245.5,616.0 313.3,616.0 318.2,609.7 319.2,609.5" fill="url(#h)" />
<polygon points="319.2,638.0 314.1,638.0 307.4,634.1 245.5,634.1 245.5,627.0 313.3,627.0 318.2,633.3 319.2,633.5" fill="url(#h)" />
<line x1="247.0" y1="609.4" x2="307.0" y2="609.4" stroke="#ffffff" stroke-width="1" stroke-dasharray="1 4"/>
<line x1="247.0" y1="615.5" x2="311.0" y2="615.5" stroke="#ffffff" stroke-width="1" stroke-dasharray="1 4"/>
<polyline points="314.1,605.5 307.4,609.4" fill="none" stroke="#ffffff" stroke-width="1" stroke-dasharray="1 2"/>
<line x1="247.0" y1="633.6" x2="307.0" y2="633.6" stroke="#ffffff" stroke-width="1" stroke-dasharray="1 4"/>
<line x1="247.0" y1="627.5" x2="311.0" y2="627.5" stroke="#ffffff" stroke-width="1" stroke-dasharray="1 4"/>
<polyline points="314.1,637.5 307.4,633.6" fill="none" stroke="#ffffff" stroke-width="1" stroke-dasharray="1 2"/>
<line x1="287.1" y1="605.5" x2="318.0" y2="605.5" stroke="#00ff00" stroke-width="1" />
<line x1="287.1" y1="638.5" x2="318.0" y2="638.5" stroke="#00ff00" stroke-width="1" />
<line x1="290.4" y1="605.5" x2="290.4" y2="638.5" stroke="#00ff00" stroke-width="1" />
<line x1="299.0" y1="605.5" x2="299.0" y2="638.5" stroke="#00ff00" stroke-width="1" />
<line x1="295.3" y1="607.2" x2="309.0" y2="607.2" stroke="#00ff00" stroke-width="1" />
<line x1="295.3" y1="636.4" x2="311.0" y2="636.4" stroke="#00ff00" stroke-width="1" />
<line x1="299.0" y1="606.4" x2="306.0" y2="606.4" stroke="#00ff00" stroke-width="1" />
<line x1="428.3" y1="605.4" x2="520.7" y2="605.4" stroke="#ffffff" stroke-width="1" />
<line x1="428.3" y1="608.9" x2="520.7" y2="608.9" stroke="#ffffff" stroke-width="1.6" />
<line x1="428.3" y1="634.1" x2="520.7" y2="634.1" stroke="#ffffff" stroke-width="1.6" />
<line x1="428.3" y1="638.8" x2="520.7" y2="638.8" stroke="#ffffff" stroke-width="1" />
<line x1="432.6" y1="609.0" x2="432.6" y2="634.0" stroke="#ffffff" stroke-width="1" />
<line x1="517.3" y1="609.0" x2="517.3" y2="634.0" stroke="#ffffff" stroke-width="1" />
<line x1="318.8" y1="609.5" x2="318.8" y2="633.5" stroke="#ffffff" stroke-width="2" />
<line x1="324.4" y1="609.5" x2="324.4" y2="633.5" stroke="#ffffff" stroke-width="1" />
<line x1="324.4" y1="612.4" x2="345.0" y2="612.4" stroke="#ffffff" stroke-width="1" />
<line x1="324.4" y1="630.6" x2="345.0" y2="630.6" stroke="#ffffff" stroke-width="1" />
<path d="M345.9,609.5 Q343.6,621.5 345.9,633.5" fill="none" stroke="#ffffff" stroke-width="1" />
<polyline points="345.5,612.4 351.8,610.6 359.3,609.7" fill="none" stroke="#ffffff" stroke-width="1" />
<polyline points="345.5,630.6 351.8,632.3 359.3,633.2" fill="none" stroke="#ffffff" stroke-width="1" />
<line x1="362.4" y1="609.5" x2="362.4" y2="633.5" stroke="#ffffff" stroke-width="1" />
<line x1="387.5" y1="609.5" x2="387.5" y2="633.5" stroke="#ffffff" stroke-width="1" />
<path d="M378.2,609.5 Q379.9,621.5 378.2,633.5" fill="none" stroke="#00ff00" stroke-width="1" />
<rect x="373.9" y="619.0" width="3.9" height="7.0" fill="#00ff00"/>
<line x1="629.8" y1="609.5" x2="629.8" y2="633.5" stroke="#ffffff" stroke-width="2" />
<line x1="625.6" y1="609.5" x2="625.6" y2="633.5" stroke="#ffffff" stroke-width="1" />
<line x1="604.5" y1="612.4" x2="625.6" y2="612.4" stroke="#ffffff" stroke-width="1" />
<line x1="604.5" y1="630.6" x2="625.6" y2="630.6" stroke="#ffffff" stroke-width="1" />
<line x1="604.5" y1="609.5" x2="604.5" y2="633.5" stroke="#ffffff" stroke-width="1" />
<polyline points="604.5,612.4 597.0,610.4 589.5,609.6" fill="none" stroke="#ffffff" stroke-width="1" />
<polyline points="604.5,630.6 597.0,632.5 589.5,633.3" fill="none" stroke="#ffffff" stroke-width="1" />
<path d="M588.2,609.5 Q586.4,621.5 588.2,633.5" fill="none" stroke="#ffffff" stroke-width="1" />
<path d="M423.8,606 A54.2,54.2 0 0 1 525.2,606 L521.3,606 A50.6,50.6 0 0 0 427.7,606 Z" fill="url(#h3)" stroke="#00ff00" stroke-width="1" />
<path d="M427.7,606 A50.6,50.6 0 0 1 474.5,574.6" fill="none" stroke="#ffffff" stroke-width="1" />
<path d="M474.5,575.1 A50.6,50.6 0 0 1 521.3,606" fill="none" stroke="#ffffff" stroke-width="1" stroke-dasharray="1 3"/>
<path d="M474.5,571.8 A53.400000000000006,53.400000000000006 0 0 1 524.7,606" fill="none" stroke="#ffffff" stroke-width="1" stroke-dasharray="1 3"/>
<line x1="474.5" y1="566.6" x2="474.5" y2="644.0" stroke="#ff0000" stroke-width="1" stroke-dasharray="13 2 2 2"/>
<line x1="428.3" y1="606.0" x2="428.3" y2="656.0" stroke="#00ff00" stroke-width="1" />
<line x1="520.7" y1="606.0" x2="520.7" y2="656.0" stroke="#00ff00" stroke-width="1" />
<line x1="428.3" y1="653.0" x2="520.7" y2="653.0" stroke="#00ff00" stroke-width="1" />
<rect x="470.0" y="649.0" width="8.0" height="4.0" fill="#00ff00"/>
<rect x="430.0" y="652.0" width="3.0" height="1.0" fill="#00ff00"/>
<rect x="516.0" y="652.0" width="3.0" height="1.0" fill="#00ff00"/>
<line x1="510.0" y1="638.8" x2="520.7" y2="638.8" stroke="#00ff00" stroke-width="1" />
<rect x="471.0" y="561.0" width="5.8" height="4.4" fill="#00ff00"/>
<line x1="464.4" y1="565.4" x2="485.0" y2="565.4" stroke="#00ff00" stroke-width="1" />
<line x1="471.0" y1="561.5" x2="471.0" y2="574.0" stroke="#00ff00" stroke-width="1" />
<line x1="478.7" y1="561.5" x2="478.7" y2="574.0" stroke="#00ff00" stroke-width="1" />
<line x1="474.5" y1="570.6" x2="565.0" y2="570.6" stroke="#00ff00" stroke-width="1" />
<line x1="562.3" y1="570.6" x2="562.3" y2="634.1" stroke="#00ff00" stroke-width="1" />
<rect x="557.2" y="589.0" width="5.1" height="7.0" fill="#00ff00"/>
<rect x="561.0" y="572.5" width="3.0" height="2.5" fill="#00ff00"/>
<rect x="561.0" y="630.0" width="3.0" height="2.5" fill="#00ff00"/>
<line x1="474.5" y1="626.7" x2="522.0" y2="572.6" stroke="#00ff00" stroke-width="1" />
<line x1="474.5" y1="626.7" x2="529.7" y2="580.4" stroke="#00ff00" stroke-width="1" />
<polygon points="511.5,574.5 516.0,570.5 520.0,574.5 515.5,578.5" fill="#00ff00" />
<polygon points="519.0,581.5 523.5,577.5 528.0,582.0 523.5,586.0" fill="#00ff00" />
<text x="478.5" y="546.6" font-size="6.6" font-weight="bold" fill="#fff" stroke="#fff" stroke-width="0.55" text-anchor="middle" class="sf" textLength="13" lengthAdjust="spacingAndGlyphs">A—A</text>
<polyline points="488.5,647.9 494.5,638.2 497.5,642.5 492.0,642.5" fill="none" stroke="#0000ff" stroke-width="1" />
<rect x="492.0" y="642.7" width="4.3" height="4.1" fill="#c8c8c8"/>
<polyline points="475.2,662.8 481.6,653.4 484.0,657.5 479.0,657.5" fill="none" stroke="#0000ff" stroke-width="1" />
<rect x="479.0" y="657.7" width="4.3" height="4.0" fill="#c8c8c8"/>
<rect x="188.2" y="609.0" width="57.3" height="25.0" fill="#00ff00"/>
<rect x="188.2" y="610.2" width="1.7" height="22.7" fill="#000"/>
<rect x="191.1" y="610.2" width="9.8" height="22.7" fill="#000"/>
<rect x="202.1" y="611.1" width="10.1" height="20.8" fill="#000"/>
<rect x="213.2" y="612.1" width="11.5" height="18.9" fill="#000"/>
<rect x="225.9" y="612.1" width="19.1" height="18.9" fill="#000"/>
<rect x="184.9" y="619.1" width="5.2" height="6.8" fill="#00ff00"/>
<rect x="196.0" y="619.1" width="5.2" height="6.8" fill="#00ff00"/>
<rect x="207.0" y="619.1" width="5.2" height="6.8" fill="#00ff00"/>
<rect x="220.0" y="619.1" width="4.2" height="6.8" fill="#00ff00"/>
<rect x="231.1" y="619.1" width="5.8" height="6.8" fill="#00ff00"/>
<rect x="190.3" y="611.0" width="1.2" height="2.0" fill="#00ff00"/>
<rect x="190.3" y="629.0" width="1.2" height="2.0" fill="#00ff00"/>
<rect x="201.5" y="611.0" width="1.2" height="2.0" fill="#00ff00"/>
<rect x="201.5" y="629.0" width="1.2" height="2.0" fill="#00ff00"/>
<rect x="212.5" y="611.0" width="1.2" height="2.0" fill="#00ff00"/>
<rect x="212.5" y="629.0" width="1.2" height="2.0" fill="#00ff00"/>
<rect x="225.2" y="611.0" width="1.2" height="2.0" fill="#00ff00"/>
<rect x="225.2" y="629.0" width="1.2" height="2.0" fill="#00ff00"/>
<line x1="233.0" y1="615.5" x2="245.5" y2="615.5" stroke="#00ff00" stroke-width="1" />
<line x1="233.0" y1="627.5" x2="245.5" y2="627.5" stroke="#00ff00" stroke-width="1" />
<path d="M237.4,615.5 Q235.6,621.5 237.4,627.5" fill="none" stroke="#00ff00" stroke-width="1" />
<rect x="236.4" y="617.0" width="1.6" height="1.6" fill="#00ff00"/>
<rect x="236.4" y="624.4" width="1.6" height="1.6" fill="#00ff00"/>
<rect x="285.1" y="618.9" width="3.9" height="7.1" fill="#00ff00"/>
<rect x="293.0" y="618.9" width="3.9" height="7.1" fill="#00ff00"/>
<rect x="299.0" y="618.5" width="4.8" height="7.5" fill="#00ff00"/>
<rect x="245.1" y="612.0" width="1.9" height="14.8" fill="#ffffff"/>
<rect x="833.0" y="611.1" width="25.0" height="4.9" fill="#00ff00"/>
<text x="861.5" y="616.2" font-size="7.2" font-weight="bold" fill="#00ff00" stroke="#00ff00" stroke-width="0.45" class="cj" textLength="20.5" lengthAdjust="spacingAndGlyphs">技术要求</text>
<rect x="832.1" y="618.1" width="103.9" height="4.9" fill="#00ff00"/>
<rect x="833.0" y="624.4" width="70.1" height="4.6" fill="#00ff00"/>
<rect x="833.0" y="631.0" width="22.1" height="4.8" fill="#00ff00"/>
<rect x="833.0" y="637.2" width="75.0" height="4.6" fill="#00ff00"/>
<rect x="833.0" y="644.1" width="122.1" height="4.9" fill="#00ff00"/>
<rect x="833.0" y="650.4" width="34.0" height="4.6" fill="#00ff00"/>
<rect x="833.0" y="657.1" width="45.9" height="4.9" fill="#00ff00"/>
<rect x="1007.0" y="60.0" width="6.0" height="4.0" fill="#d4d4d4"/>
<rect x="1014.0" y="56.0" width="6.0" height="4.0" fill="#d4d4d4"/>
<polygon points="1015.2,61.0 1020.2,61.0 1017.7,66.2" fill="#00ff00" />
<rect x="1017.0" y="62.0" width="1.3" height="2.0" fill="#000"/>
<rect x="1014.0" y="61.0" width="1.0" height="1.0" fill="#00ff00"/>
<rect x="1015.0" y="62.0" width="1.0" height="1.0" fill="#00ff00"/>
<rect x="1020.0" y="60.0" width="1.0" height="1.0" fill="#00ff00"/>
<rect x="1021.0" y="59.0" width="1.0" height="1.0" fill="#00ff00"/>
<rect x="1021.0" y="58.0" width="1.0" height="1.0" fill="#00ff00"/>
<rect x="1022.0" y="57.0" width="1.0" height="1.0" fill="#00ff00"/>
<rect x="1022.0" y="56.0" width="1.0" height="1.0" fill="#00ff00"/>
<rect x="1023.0" y="55.0" width="1.0" height="1.0" fill="#00ff00"/>
<line x1="893.5" y1="691.5" x2="1052.5" y2="691.5" stroke="#ff00ff" stroke-width="1" />
<line x1="893.5" y1="691.5" x2="893.5" y2="741.0" stroke="#ff00ff" stroke-width="1" />
<rect x="893.5" y="709.0" width="70.5" height="1.6" fill="#ff00ff"/>
<rect x="893.5" y="715.0" width="70.5" height="1.8" fill="#ff00ff"/>
<line x1="893.5" y1="722.5" x2="964.0" y2="722.5" stroke="#ff00ff" stroke-width="1" />
<line x1="894.0" y1="697.5" x2="963.0" y2="697.5" stroke="#00ffff" stroke-width="1" />
<line x1="894.0" y1="703.5" x2="963.0" y2="703.5" stroke="#00ffff" stroke-width="1" />
<line x1="894.0" y1="728.5" x2="963.0" y2="728.5" stroke="#00ffff" stroke-width="1" />
<line x1="894.0" y1="734.5" x2="963.0" y2="734.5" stroke="#00ffff" stroke-width="1" />
<line x1="902.5" y1="691.5" x2="902.5" y2="716.0" stroke="#ff00ff" stroke-width="1" />
<line x1="924.5" y1="691.5" x2="924.5" y2="716.0" stroke="#ff00ff" stroke-width="1" />
<line x1="939.5" y1="691.5" x2="939.5" y2="716.0" stroke="#ff00ff" stroke-width="1" />
<rect x="910.0" y="691.5" width="2.0" height="24.5" fill="#ff00ff"/>
<rect x="949.0" y="691.5" width="2.0" height="24.5" fill="#ff00ff"/>
<line x1="902.5" y1="716.0" x2="902.5" y2="741.0" stroke="#ff00ff" stroke-width="1" />
<line x1="916.5" y1="716.0" x2="916.5" y2="741.0" stroke="#ff00ff" stroke-width="1" />
<line x1="928.5" y1="716.0" x2="928.5" y2="741.0" stroke="#ff00ff" stroke-width="1" />
<line x1="951.5" y1="716.0" x2="951.5" y2="741.0" stroke="#ff00ff" stroke-width="1" />
<rect x="936.0" y="716.0" width="2.0" height="25.0" fill="#ff00ff"/>
<rect x="963.0" y="691.5" width="2.0" height="49.5" fill="#ff00ff"/>
<rect x="895.0" y="712.1" width="5.8" height="2.9" fill="#ff0000"/>
<rect x="904.1" y="712.1" width="5.7" height="2.9" fill="#ff0000"/>
<rect x="915.1" y="712.1" width="5.8" height="2.9" fill="#ff0000"/>
<rect x="925.3" y="712.1" width="13.6" height="2.9" fill="#ff0000"/>
<rect x="952.1" y="712.1" width="10.8" height="2.9" fill="#ff0000"/>
<rect x="942.0" y="712.1" width="5.8" height="3.9" fill="#ff0000"/>
<rect x="895.0" y="718.1" width="5.8" height="3.7" fill="#ff0000"/>
<rect x="929.2" y="718.1" width="6.6" height="3.7" fill="#ff0000"/>
<rect x="895.0" y="724.2" width="5.8" height="4.5" fill="#ff0000"/>
<rect x="929.2" y="724.2" width="5.6" height="4.5" fill="#ff0000"/>
<rect x="894.1" y="730.1" width="6.0" height="3.7" fill="#ff0000"/>
<rect x="929.2" y="736.1" width="5.6" height="3.7" fill="#ff0000"/>
<line x1="964.0" y1="697.5" x2="1008.5" y2="697.5" stroke="#ff00ff" stroke-width="1" />
<rect x="964.0" y="715.0" width="44.5" height="1.8" fill="#ff00ff"/>
<rect x="964.0" y="724.0" width="44.5" height="1.4" fill="#ff00ff"/>
<rect x="964.0" y="731.5" width="44.5" height="1.3" fill="#ff00ff"/>
<rect x="985.8" y="716.0" width="1.8" height="16.0" fill="#ff00ff"/>
<line x1="997.5" y1="716.0" x2="997.5" y2="732.0" stroke="#ff00ff" stroke-width="1" />
<rect x="1007.8" y="691.5" width="1.6" height="49.5" fill="#ff00ff"/>
<rect x="968.2" y="718.1" width="11.8" height="4.5" fill="#ff0000"/>
<rect x="989.9" y="718.1" width="6.1" height="4.5" fill="#ff0000"/>
<rect x="999.0" y="718.1" width="6.0" height="4.5" fill="#ff0000"/>
<rect x="999.0" y="726.0" width="6.0" height="4.8" fill="#ff0000"/>
<rect x="973.9" y="735.0" width="4.0" height="4.9" fill="#ff0000"/>
<rect x="982.0" y="735.0" width="4.0" height="4.9" fill="#ff0000"/>
<rect x="989.0" y="735.0" width="4.0" height="4.9" fill="#ff0000"/>
<rect x="998.1" y="735.0" width="3.9" height="4.9" fill="#ff0000"/>
<line x1="969.6" y1="724.0" x2="969.6" y2="733.0" stroke="#00ffff" stroke-width="1" />
<line x1="975.5" y1="724.0" x2="975.5" y2="733.0" stroke="#00ffff" stroke-width="1" />
<line x1="981.5" y1="724.0" x2="981.5" y2="733.0" stroke="#00ffff" stroke-width="1" />
<text x="982.6" y="709.8" font-size="5.6" font-weight="bold" fill="#ff0000" stroke="#ff0000" stroke-width="0.5" text-anchor="middle" class="cj" textLength="9" lengthAdjust="spacingAndGlyphs">桥壳</text>
<line x1="1008.7" y1="707.5" x2="1052.5" y2="707.5" stroke="#ff00ff" stroke-width="1" />
<rect x="1008.7" y="724.0" width="43.8" height="1.6" fill="#ff00ff"/>
<text x="1029.6" y="718.7" font-size="5.6" font-weight="bold" fill="#ff0000" stroke="#ff0000" stroke-width="0.5" text-anchor="middle" class="cj" textLength="9" lengthAdjust="spacingAndGlyphs">后桥</text>
</g>
<g filter="url(#n)">
<rect x="0" y="0" width="1077" height="23" fill="#f0f0f0"/>
<rect x="0" y="0" width="151" height="18" fill="#ffffff"/>
<rect x="151" y="0" width="1" height="18" fill="#dfe6f0"/>
<polygon points="140,7.5 147.5,7.5 143.75,11.5" fill="#000"/>
<rect x="201.5" y="0" width="1" height="19" fill="#a0a0a0"/>
<rect x="204" y="0" width="1.5" height="19" fill="#b8b8b8"/><rect x="205.5" y="0" width="1" height="19" fill="#fff"/>
<rect x="208.5" y="0" width="1.5" height="19" fill="#b8b8b8"/><rect x="210" y="0" width="1.5" height="19" fill="#fff"/>
<rect x="213" y="0" width="1" height="18" fill="#c8c8c8"/>
<rect x="216.5" y="0" width="148" height="18" fill="#ffffff"/>
<rect x="222.5" y="3.5" width="9" height="9" fill="#00ff00" stroke="#000" stroke-width="1"/>
<text transform="translate(236,11.6) scale(1,1.2)" class="mono">ByLayer</text>
<polygon points="353.7,7.5 361.3,7.5 357.5,11.5" fill="#000"/>
<rect x="364.5" y="0" width="8.5" height="18" fill="#e6ebf3"/><rect x="368" y="0" width="1" height="18" fill="#707070"/><rect x="369" y="0" width="1" height="18" fill="#fff"/>
<rect x="373" y="0" width="158" height="18" fill="#ffffff"/>
<rect x="377" y="8" width="60" height="1" fill="#000"/>
<text transform="translate(440.5,11.6) scale(1,1.2)" class="mono">ByLayer</text>
<polygon points="519.7,7.5 527.3,7.5 523.5,11.5" fill="#000"/>
<rect x="531" y="0" width="8" height="18" fill="#e6ebf3"/><rect x="534.2" y="0" width="1" height="18" fill="#707070"/><rect x="535.2" y="0" width="1" height="18" fill="#fff"/>
<rect x="539" y="0" width="123.5" height="18" fill="#ffffff"/>
<rect x="543" y="8" width="35" height="1" fill="#000"/>
<text transform="translate(583,11.6) scale(1,1.2)" class="mono">ByLayer</text>
<polygon points="651,7.5 658.4,7.5 654.7,11.5" fill="#000"/>
<rect x="662.5" y="0" width="7" height="18" fill="#e6ebf3"/><rect x="665" y="0" width="1" height="18" fill="#707070"/><rect x="666" y="0" width="1" height="18" fill="#fff"/>
<rect x="669.5" y="-1" width="118.5" height="18.5" fill="#f0f0f0" stroke="#b4b4b4" stroke-width="1"/>
<rect x="770" y="0" width="17.5" height="17" fill="#fdfdfd"/>
<text x="678" y="12" font-size="12" fill="#6d6d6d" class="cjs">随颜色</text>
<polygon points="776.7,7.5 784.3,7.5 780.5,11.5" fill="#a8a8a8"/>
<rect x="792" y="0" width="1" height="18" fill="#c0c0c0"/>
<rect x="0" y="18" width="1077" height="1" fill="#f4f4f4"/>
<rect x="0" y="19" width="1077" height="1" fill="#a0a0a0"/>
<rect x="0" y="20" width="1077" height="1" fill="#e6e6e6"/>
<rect x="0" y="21" width="1077" height="1" fill="#b4b4b4"/>
<rect x="0" y="22" width="1077" height="1" fill="#505050"/>
<!-- layer icons -->
<g id="ic1">
<polygon points="155.3,9.3 162.8,6.2 170.9,10.3 164.4,13.7" fill="#f2dc10" stroke="#c0a400" stroke-width="0.7"/>
<polyline points="155.6,10.2 164.4,14 170.9,11" fill="none" stroke="#a88c00" stroke-width="0.9"/>
<polygon points="155.3,6.4 162.8,3.2 170,7.3 163.9,10" fill="#eef3fa"/>
<polyline points="155.3,6.4 163.9,10 170,7.3" fill="none" stroke="#4a5e80" stroke-width="0.9" stroke-dasharray="1.3 0.9"/>
<polygon points="155.3,3.6 162.8,0.4 169.8,4.3 163.5,7.3" fill="#b4cbe6"/>
<polygon points="159,2 162.8,0.4 166.5,2.4 163,4" fill="#9dbadb"/>
<polyline points="155.3,3.6 163.5,7.3 169.8,4.3" fill="none" stroke="#4a5e80" stroke-width="0.9" stroke-dasharray="1.3 0.9"/>
<path d="M155.1,15.8 L158.4,12.7" stroke="#0a246a" stroke-width="1.3" fill="none" stroke-dasharray="1.4 0.5"/>
<polygon points="156.3,12.2 159,12.1 158.9,14.9" fill="#0a246a"/>
</g>
<g id="ic2">
<polygon points="178.3,10.4 186,7 194,11.4 187.6,14.7" fill="#c6d8ee"/>
<polyline points="178.3,10.4 187.6,14.7 194,11.4" fill="none" stroke="#4a6a98" stroke-width="0.9" stroke-dasharray="1.3 0.9"/>
<polygon points="178.3,7.4 186,4 193.5,8.2 187,11.6" fill="#d4e2f2"/>
<polyline points="178.3,7.4 187,11.6 193.5,8.2" fill="none" stroke="#4a6a98" stroke-width="0.9" stroke-dasharray="1.3 0.9"/>
<polygon points="178.3,4.4 186,1 193,5 186.5,8.5" fill="#bdd2ea"/>
<polyline points="178.3,4.4 186.5,8.5 193,5" fill="none" stroke="#4a6a98" stroke-width="0.9" stroke-dasharray="1.3 0.9"/>
<path d="M186.6,1.2 A3.4,3.4 0 0 1 190.9,6.2" stroke="#163c78" stroke-width="1.7" fill="none"/>
<path d="M187.5,0.9 Q184.6,1.6 183.6,5.2" stroke="#163c78" stroke-width="1.9" fill="none"/>
<polygon points="181.4,4.6 185.6,5.4 183.2,9" fill="#163c78"/>
<circle cx="188" cy="3.8" r="1.6" fill="#dce8f6"/>
</g>
</g>
<g filter="url(#n)">
<rect x="0" y="745" width="1077" height="12" fill="#f0f0f0"/>
<polygon points="0,745 79.5,745 75.5,757 0,757" fill="#fafafa"/>
<line x1="79.5" y1="745" x2="75.3" y2="757" stroke="#000" stroke-width="1.2"/>
<text transform="translate(5,754.6) scale(1,1.2)" class="mono">Title Block</text>
<path d="M1001.5,758 L1001.5,755.5 Q1001.5,751 1006,751 L1078,751 L1078,758 Z" fill="#ffffff" stroke="#c2c2c2" stroke-width="1"/>
</g>
</svg>
</body></html>
